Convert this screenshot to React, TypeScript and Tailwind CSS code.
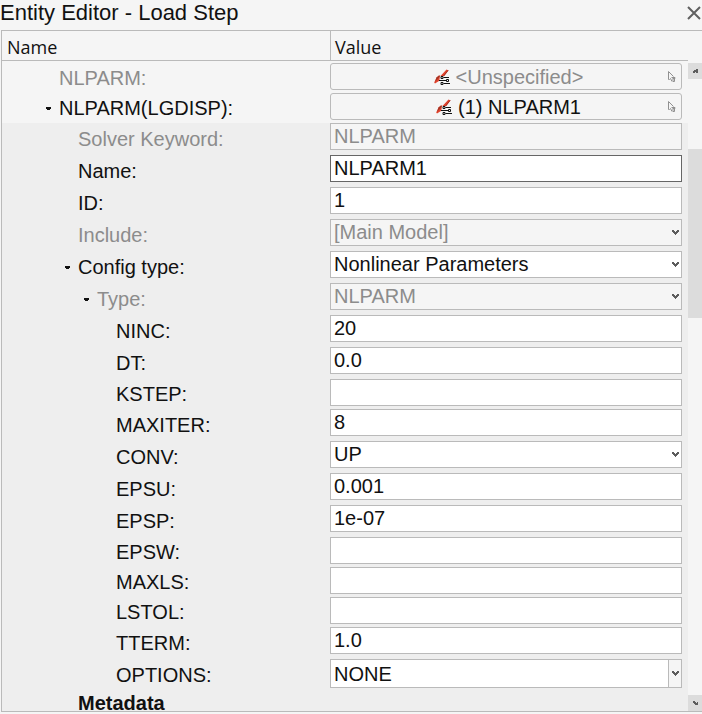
import { useState } from 'react'
import clsx from 'clsx'

type Kind = 'text' | 'select' | 'combo'

interface Property {
  id: string
  label: string
  value: string
  kind?: Kind
  level: 1 | 2 | 3
  disabled?: boolean
  expander?: boolean
}

const INDENT = {
  1: 'pl-[76px]',
  2: 'pl-[95px]',
  3: 'pl-[114px]',
}

const PROPERTIES: Property[] = [
  { id: 'keyword', label: 'Solver Keyword:', value: 'NLPARM', level: 1, disabled: true },
  { id: 'name', label: 'Name:', value: 'NLPARM1', level: 1 },
  { id: 'id', label: 'ID:', value: '1', level: 1 },
  { id: 'include', label: 'Include:', value: '[Main Model]', kind: 'select', level: 1, disabled: true },
  { id: 'config', label: 'Config type:', value: 'Nonlinear Parameters', kind: 'select', level: 1, expander: true },
  { id: 'type', label: 'Type:', value: 'NLPARM', kind: 'select', level: 2, disabled: true, expander: true },
  { id: 'ninc', label: 'NINC:', value: '20', level: 3 },
  { id: 'dt', label: 'DT:', value: '0.0', level: 3 },
  { id: 'kstep', label: 'KSTEP:', value: '', level: 3 },
  { id: 'maxiter', label: 'MAXITER:', value: '8', level: 3 },
  { id: 'conv', label: 'CONV:', value: 'UP', kind: 'select', level: 3 },
  { id: 'epsu', label: 'EPSU:', value: '0.001', level: 3 },
  { id: 'epsp', label: 'EPSP:', value: '1e-07', level: 3 },
  { id: 'epsw', label: 'EPSW:', value: '', level: 3 },
  { id: 'maxls', label: 'MAXLS:', value: '', level: 3 },
  { id: 'lstol', label: 'LSTOL:', value: '', level: 3 },
  { id: 'tterm', label: 'TTERM:', value: '1.0', level: 3 },
  { id: 'options', label: 'OPTIONS:', value: 'NONE', kind: 'combo', level: 3 },
]

function Expander({ label }: { label: string }) {
  return (
    <button type="button" aria-label={`Collapse ${label}`} className="mr-2 flex h-4 w-[5px] items-center">
      <svg width="5" height="3" viewBox="0 0 5 3" fill="#111" shapeRendering="crispEdges" aria-hidden="true">
        <path d="M0 0h5v2H4v1H1V2H0z" />
      </svg>
    </button>
  )
}

function Chevron() {
  return (
    <svg width="7" height="5" viewBox="0 0 7 5" fill="#5c5c5c" shapeRendering="crispEdges" aria-hidden="true">
      <path d="M0 0h2v1h1v1h1V1h1V0h2v2H6v1H5v1H4v1H3V4H2V3H1V2H0z" />
    </svg>
  )
}

function LoadIcon() {
  return (
    <svg width="16" height="16" viewBox="0 0 16 16" aria-hidden="true">
      <path d="M12.5 0.5 14.5 1.5 9 8.5 6.5 11 1 14.5 0.2 13.5 2.5 8.5 5 6.5 6.5 7z" fill="#e0442e" />
      <path d="M2.5 8.5 5 6.5 6.5 7 1 13z" fill="#a83424" />
      <path d="M14.2 1.2 8.5 8.5" stroke="#9a2a1e" strokeWidth="0.8" />
      <path d="M6 7h10v9H5v-2.5z" fill="#f5f5f5" />
      <g fill="none" stroke="#111" strokeWidth="1">
        <path d="M9.5 8.5H15M5 11.5h7M9.5 14.5H16" />
        <path d="M7 7.5h2v2H7zM12.5 10.5h2v2h-2zM7 13.5h2v2H7z" />
      </g>
    </svg>
  )
}

function PickIcon() {
  return (
    <svg width="8" height="12" viewBox="0 0 8 12" fill="none" stroke="#909090" aria-hidden="true">
      <path d="M0.5 0.5v8h1l1-1 1.5 3M0.5 0.5l5 5M3.5 6.5h3.5v1h-2M5 6v4.5h1.5V8" />
    </svg>
  )
}

interface EntityRowProps {
  label: string
  value: string
  disabled?: boolean
  expander?: boolean
}

function EntityRow({ label, value, disabled, expander }: EntityRowProps) {
  return (
    <div className="flex h-[30px]">
      <div
        className={clsx(
          'flex w-[328px] shrink-0 items-center',
          expander ? 'pl-[44px]' : 'pl-[57px]',
          disabled && 'text-[#8c8c8c]',
        )}
      >
        {expander && <Expander label={label} />}
        {label}
      </div>
      <button
        type="button"
        aria-label={`${label} ${value}`}
        className="mr-1.5 flex h-[27px] min-w-0 flex-1 items-center rounded-[3px] border border-[#bababa] pr-[5px] pl-[18px]"
      >
        <span className={clsx('flex flex-1 items-center justify-center gap-1.5', disabled && 'text-[#8c8c8c]')}>
          <LoadIcon />
          {value}
        </span>
        <PickIcon />
      </button>
    </div>
  )
}

function Field({ property }: { property: Property }) {
  const { id, kind = 'text', disabled } = property
  const [value, setValue] = useState(property.value)
  const box = clsx(
    'block w-full appearance-none rounded-none border pl-[3px] outline-none',
    kind === 'combo' ? 'h-[29px]' : 'h-[27px]',
    kind === 'select' && 'pb-px',
    id === 'name' ? 'border-[#666]' : 'border-[#bababa]',
    disabled ? 'bg-[#f5f5f5] text-[#8c8c8c] opacity-100' : 'bg-white',
  )

  if (kind === 'text') {
    return (
      <input
        id={id}
        type="text"
        value={value}
        disabled={disabled}
        onChange={(e) => setValue(e.target.value)}
        className={box}
      />
    )
  }

  return (
    <div className="relative">
      <select
        id={id}
        value={value}
        disabled={disabled}
        onChange={(e) => setValue(e.target.value)}
        className={box}
      >
        <option>{property.value}</option>
      </select>
      <span
        className={clsx(
          'pointer-events-none absolute inset-y-px right-px flex w-[13px] items-center justify-end pr-[2px]',
          kind === 'combo' && 'border-l border-[#bababa] bg-[#f5f5f5]',
        )}
      >
        <Chevron />
      </span>
    </div>
  )
}

function PropertyRow({ property }: { property: Property }) {
  const { id, label, level, value, disabled, expander } = property
  return (
    <div className={clsx('flex', value ? 'h-8' : 'h-[30px]')}>
      <div className={clsx('flex w-[328px] shrink-0 items-center', INDENT[level], disabled && 'text-[#8c8c8c]')}>
        {expander && (
          <span className="-ml-[13px] flex">
            <Expander label={label} />
          </span>
        )}
        <label htmlFor={id}>{label}</label>
      </div>
      <div className="mr-1.5 min-w-0 flex-1">
        <Field property={property} />
      </div>
    </div>
  )
}

function ScrollBar() {
  return (
    <div className="flex w-3.5 shrink-0 flex-col bg-[#f5f5f5] pt-[2px]">
      <button type="button" aria-label="Scroll up" className="flex h-4 items-center justify-center bg-[#dcdcdc]">
        <svg width="5" height="4" viewBox="0 0 5 4" fill="#5c5c5c" shapeRendering="crispEdges" aria-hidden="true">
          <path d="M3 0h2v4H3V3H2v1H0V2h1V1h2z" />
        </svg>
      </button>
      <div className="flex flex-1 flex-col">
        <div className="grow-[70]" />
        <div className="grow-[169] bg-[#dcdcdc]" />
        <div className="grow-[377]" />
      </div>
      <button type="button" aria-label="Scroll down" className="flex h-4 items-center justify-center bg-[#dcdcdc]">
        <svg width="5" height="4" viewBox="0 0 5 4" fill="#5c5c5c" shapeRendering="crispEdges" aria-hidden="true">
          <path d="M0 0h2v1h1v1h1V1h1v3H2V3H1V2H0z" />
        </svg>
      </button>
    </div>
  )
}

export default function App() {
  return (
    <div className="flex h-screen flex-col bg-[#f5f5f5] pb-[2px] font-['Liberation_Sans',Arial,sans-serif] text-[20px] leading-6 text-[#111]">
      <header className="flex h-[30px] shrink-0 items-center justify-between pb-1">
        <h1 className="text-[22px]">Entity Editor - Load Step</h1>
        <button type="button" aria-label="Close" className="flex h-6 w-4 items-center justify-center">
          <svg width="14" height="14" viewBox="0 0 14 14" stroke="#606060" strokeWidth="2" aria-hidden="true">
            <path d="M1 1l12 12M13 1 1 13" />
          </svg>
        </button>
      </header>

      <main className="ml-px flex min-h-0 flex-1 flex-col border-y border-l border-[#bababa]">
        <div className="mr-3.5 flex h-[30px] shrink-0 border-b border-[#bababa] font-['Open_Sans','Noto_Sans',sans-serif] text-[18px]">
          <div className="flex w-[328px] shrink-0 items-center pt-0.5 pl-[5px]">Name</div>
          <div className="flex flex-1 items-center border-l border-[#bababa] pt-0.5 pl-1">Value</div>
        </div>

        <div className="flex min-h-0 flex-1">
          <div className="min-w-0 flex-1 overflow-hidden pt-[2px]">
            <EntityRow label="NLPARM:" value="<Unspecified>" disabled />
            <EntityRow label="NLPARM(LGDISP):" value="(1) NLPARM1" expander />
            <div className="bg-[#eee]">
              {PROPERTIES.map((property) => (
                <PropertyRow key={property.id} property={property} />
              ))}
              <h2 className="pl-[76px] font-bold">Metadata</h2>
            </div>
          </div>
          <ScrollBar />
        </div>
      </main>
    </div>
  )
}
